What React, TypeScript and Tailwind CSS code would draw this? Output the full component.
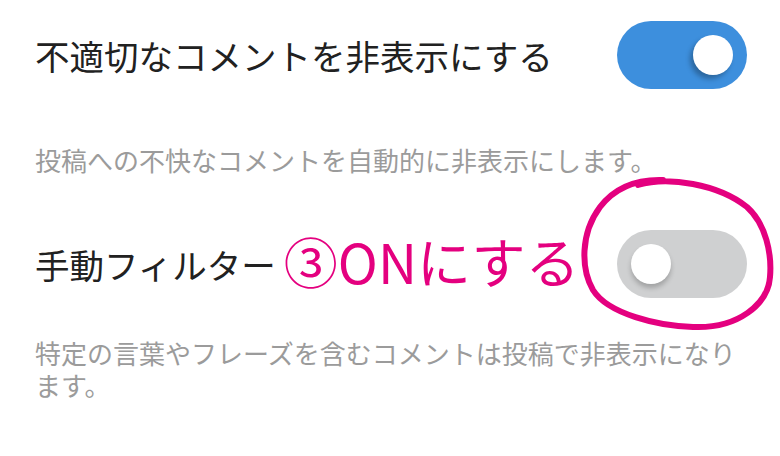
import React from 'react';

const font = { fontFamily: '"Noto Sans CJK JP", "Noto Sans", sans-serif' };

function Toggle({ on }: { on: boolean }) {
  return (
    <div
      className={
        on
          ? 'flex h-[68px] w-[130px] shrink-0 items-center justify-end rounded-full bg-[#3d8fdd] px-[14px]'
          : 'flex h-[68px] w-[130px] shrink-0 items-center justify-start rounded-full bg-[#cfd0d1] px-[14px]'
      }
    >
      <div
        className={
          on
            ? 'h-10 w-10 rounded-full bg-white shadow-[-3px_4px_5px_rgba(0,0,0,0.28)]'
            : 'h-10 w-10 rounded-full bg-white shadow-[0px_4px_5px_rgba(0,0,0,0.22)]'
        }
      />
    </div>
  );
}

export default function App() {
  return (
    <div className="relative h-[456px] w-[780px] overflow-hidden bg-white px-[35px] pt-[21px]" style={font}>
      {/* 不適切なコメント */}
      <div className="flex items-center justify-between">
        <span className="text-[34.5px] leading-[68px] text-[#212121]">不適切なコメントを非表示にする</span>
        <div className="mr-[-2px]">
          <Toggle on />
        </div>
      </div>
      <p className="mt-[55px] text-[26px] leading-[32px] text-[#9b9b9b]">
        投稿への不快なコメントを自動的に非表示にします。
      </p>

      {/* 手動フィルター */}
      <div className="mt-[54px] flex items-center justify-between">
        <div className="flex items-center">
          <span className="text-[34.5px] leading-[68px] text-[#212121]">手動フィルター</span>
          <span className="ml-[8px] mt-[-6px] text-[54px] leading-[68px] text-[#e4007f]">③ONにする</span>
        </div>
        <div className="mr-[-2px]">
          <Toggle on={false} />
        </div>
      </div>
      <p className="mt-[39px] w-[708px] text-[26px] leading-[32px] text-[#9b9b9b]">
        特定の言葉やフレーズを含むコメントは投稿で非表示になります。
      </p>

      {/* annotation circle */}
      <svg
        className="absolute left-[578px] top-[174px]"
        width="200"
        height="160"
        viewBox="0 0 200 160"
        fill="none"
      >
        <path
          d="M60 11 C 90 2, 140 10, 169 33 C 188 50, 194 80, 192 103 C 190 130, 160 155, 115 153 C 80 152, 30 140, 15 116 C 3 95, 2 60, 22 33 C 35 16, 55 5, 85 6"
          stroke="#e4007f"
          strokeWidth="6"
          strokeLinecap="round"
          strokeLinejoin="round"
        />
      </svg>
    </div>
  );
}
